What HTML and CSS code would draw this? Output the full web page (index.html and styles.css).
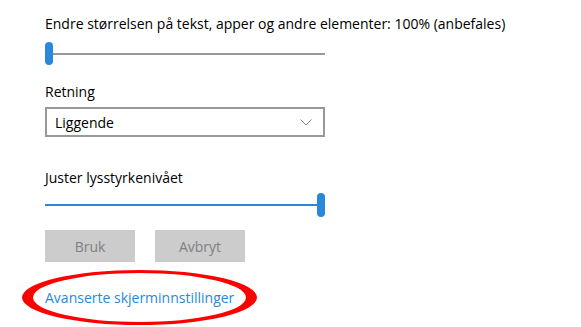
FILE: index.html
```html
<!DOCTYPE html>
<html lang="nb">
<head>
  <meta charset="UTF-8">
  <title>Skjerm</title>
  <link rel="stylesheet" href="styles.css">
</head>
<body>
  <main class="panel">
    <p class="label label-first">Endre størrelsen på tekst, apper og andre elementer: 100% (anbefales)</p>
    <div class="slider">
      <div class="track"></div>
      <div class="thumb"></div>
    </div>

    <p class="label label-orient">Retning</p>
    <div class="select">
      <span>Liggende</span>
      <svg class="chevron" width="12" height="7" viewBox="0 0 12 7">
        <path d="M0.5 0.5 L6 6 L11.5 0.5" fill="none" stroke="#888" stroke-width="1"/>
      </svg>
    </div>

    <p class="label label-bright">Juster lysstyrkenivået</p>
    <div class="slider slider-bright">
      <div class="track track-full"></div>
      <div class="thumb"></div>
    </div>

    <div class="buttons">
      <button class="btn" disabled>Bruk</button>
      <button class="btn" disabled>Avbryt</button>
    </div>

    <div class="link-row">
      <a class="link" href="#">Avanserte skjerminnstillinger</a>
      <!-- red annotation ring round the link -->
      <svg class="circle" width="240" height="58" viewBox="0 0 240 58">
        <path fill="#f00" fill-rule="evenodd"
          d="M2 28.5 A117.5 27.5 0 0 1 237 28.5 A117.5 27.5 0 0 1 2 28.5 Z
             M13 28.5 A106.5 24.5 0 0 1 226 28.5 A106.5 24.5 0 0 1 13 28.5 Z"/>
      </svg>
    </div>
  </main>
</body>
</html>
```

FILE: styles.css
```css
html, body {
  min-height: 100%;
}
body {
  margin: 0;
  background-color: #fff;
  font-family: 'Open Sans', 'Noto Sans', sans-serif;
  color: #000;
}
.panel {
  padding: 0 0 0 45px;
  display: flex;
  flex-direction: column;
  align-items: flex-start;
}
.label {
  margin: 0;
  font-size: 14px;
  line-height: 20px;
  height: 20px;
  white-space: nowrap;
}
.label-first {
  margin-top: 14px;
  margin-bottom: 8px;
}
.slider {
  display: flex;
  align-items: center;
  width: 280px;
  height: 23px;
}
.track {
  flex: 1;
  height: 2px;
  background-color: #999;
  order: 2;
}
.track-full {
  background-color: #2b88d8;
  order: 1;
}
.thumb {
  width: 8px;
  height: 23px;
  border-radius: 4px;
  background-color: #2b88d8;
  order: 1;
}
.slider-bright .thumb {
  order: 2;
  height: 24px;
}
.label-orient {
  margin-top: 17px;
  margin-bottom: 5px;
}
.select {
  box-sizing: border-box;
  width: 280px;
  height: 30px;
  border: 2px solid #999;
  display: flex;
  align-items: center;
  justify-content: space-between;
  padding: 0 11px 0 8px;
  font-size: 14px;
}
.chevron {
  display: block;
}
.label-bright {
  margin-top: 31px;
  margin-bottom: 5px;
}
.buttons {
  display: flex;
  gap: 20px;
  margin-top: 14px;
}
.btn {
  width: 90px;
  height: 32px;
  border: none;
  background-color: #ccc;
  color: #808080;
  font-family: inherit;
  font-size: 14px;
  padding: 0;
}
.link-row {
  position: relative;
  margin-top: 7px;
  padding: 19px 0 19px;
}
.link {
  display: block;
  font-size: 14px;
  line-height: 20px;
  color: #2b88d8;
  text-decoration: none;
  white-space: nowrap;
}
.circle {
  position: absolute;
  left: -25px;
  top: 0;
  display: block;
}
```
